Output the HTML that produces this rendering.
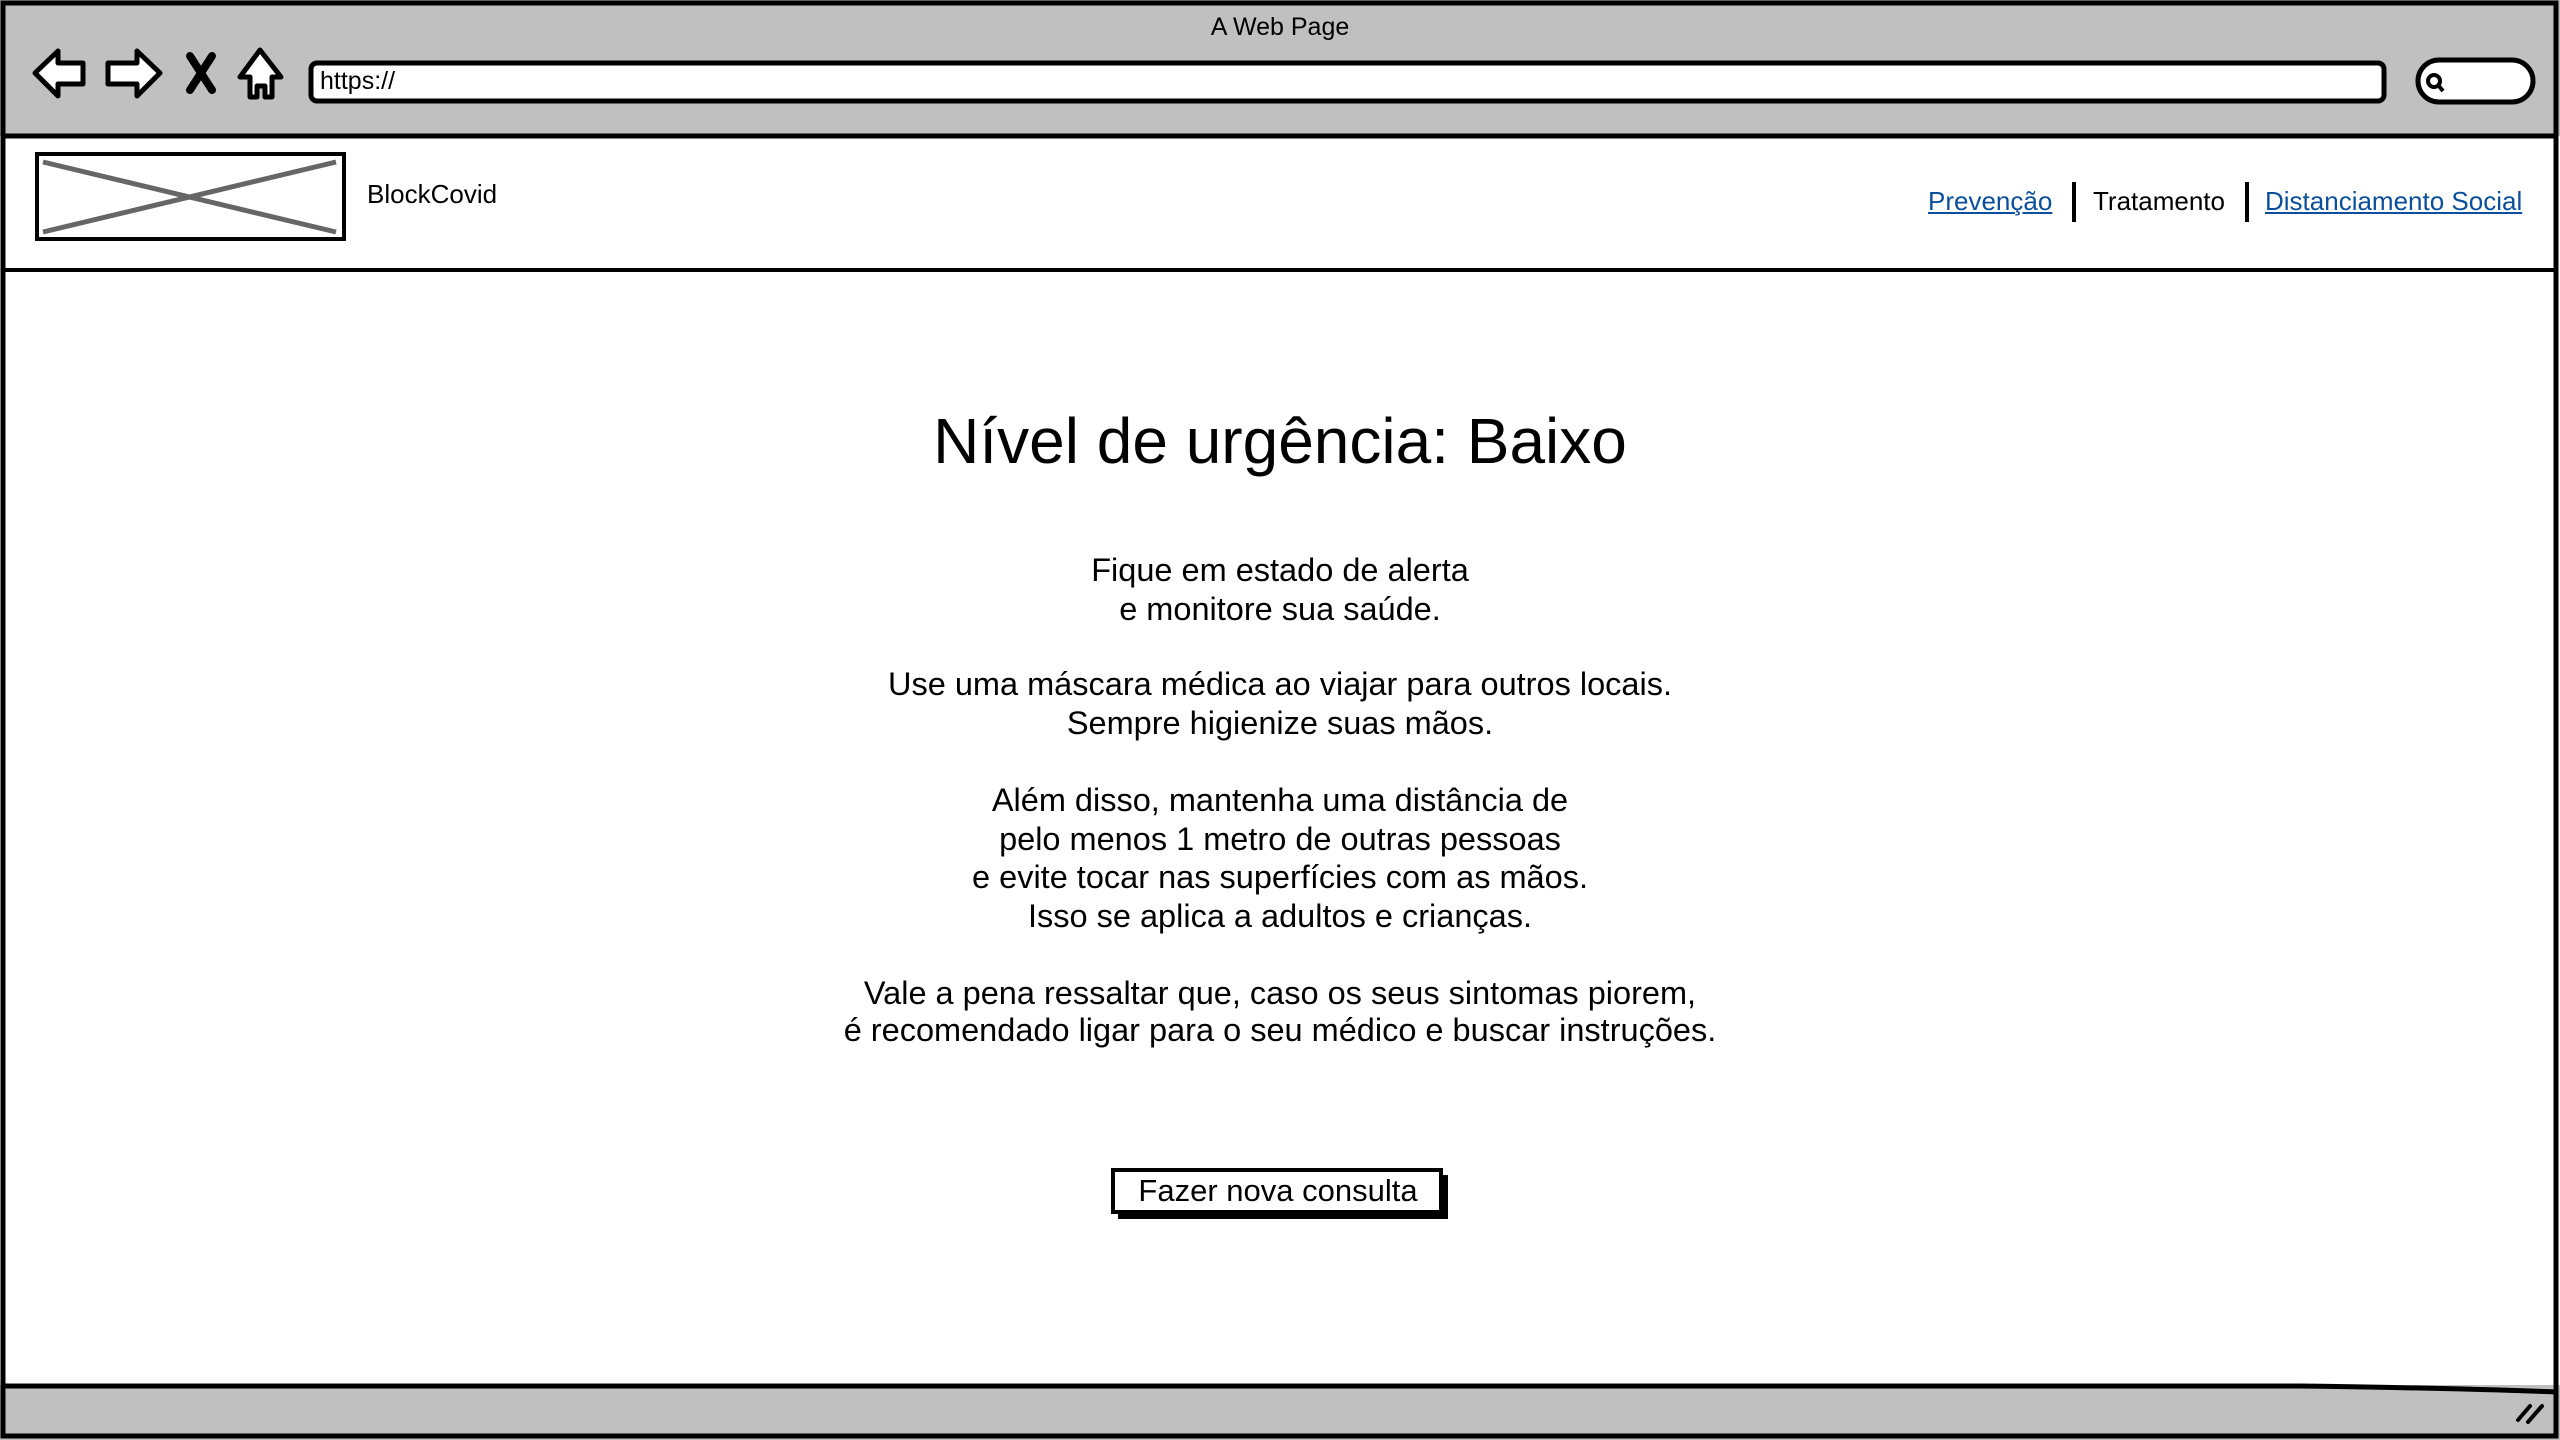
<!DOCTYPE html>
<html><head><meta charset="utf-8"><style>
html,body{margin:0;padding:0;width:2560px;height:1440px;overflow:hidden;background:#fff;font-family:"Liberation Sans",sans-serif;color:#000}
.abs{position:absolute}
.c{position:absolute;left:0;width:2560px;text-align:center;white-space:nowrap}
.p{font-size:32.5px;line-height:38px}
a{color:#0a4f9b;text-decoration:underline}
</style></head><body>
<div class="abs" style="left:0;top:0;width:2560px;height:136px;background:#c0c0c0"></div>
<div class="abs" style="left:0;top:1385px;width:2560px;height:55px;background:#c0c0c0"></div>
<svg class="abs" style="left:0;top:0" width="2560" height="1440">
<rect x="3" y="3" width="2553" height="1433" fill="none" stroke="#000" stroke-width="5"/>
<line x1="3" y1="136" x2="2557" y2="136" stroke="#000" stroke-width="5"/>
<line x1="3" y1="270" x2="2557" y2="270" stroke="#000" stroke-width="4"/>
<path d="M3 1386 L2300 1386 Q2450 1388 2557 1392" fill="none" stroke="#000" stroke-width="5"/>
<path d="M35 73 L58 51 L58 63 L83 63 L83 84 L58 84 L58 96 Z" fill="#fff" stroke="#000" stroke-width="5" stroke-linejoin="round"/>
<path d="M160 73 L137 51 L137 63 L108 63 L108 84 L137 84 L137 96 Z" fill="#fff" stroke="#000" stroke-width="5" stroke-linejoin="round"/>
<path d="M190 56 L212 90 M212 56 L190 90" stroke="#000" stroke-width="8" stroke-linecap="round"/>
<path d="M260 50 L281 77 L272 77 L272 97 L265 97 L265 86 L257 86 L257 97 L250 97 L250 77 L240 77 Z" fill="#fff" stroke="#000" stroke-width="5" stroke-linejoin="round"/>
<rect x="311" y="63" width="2073" height="38" rx="6" fill="#fff" stroke="#000" stroke-width="5"/>
<rect x="2418" y="60" width="115" height="42" rx="21" fill="#fff" stroke="#000" stroke-width="5"/>
<circle cx="2434" cy="81" r="6" fill="none" stroke="#000" stroke-width="4"/>
<line x1="2438" y1="85" x2="2443" y2="91" stroke="#000" stroke-width="4"/>
<rect x="37" y="154" width="307" height="85" fill="#fff" stroke="#000" stroke-width="4"/>
<path d="M43 162 L336 232 M43 232 L336 162" stroke="#666" stroke-width="5"/>
<line x1="2074" y1="182" x2="2074" y2="222" stroke="#000" stroke-width="4"/>
<line x1="2247" y1="182" x2="2247" y2="222" stroke="#000" stroke-width="4"/>
<rect x="1118" y="1175" width="330" height="44" fill="#000"/>
<rect x="1113" y="1170" width="328" height="42" fill="#fff" stroke="#000" stroke-width="4"/>
<path d="M2518 1420 L2530 1406 M2528 1422 L2542 1406" stroke="#000" stroke-width="4" stroke-linecap="round"/>
</svg>
<div class="c" style="top:12px;font-size:25px;line-height:30px">A Web Page</div>
<div class="abs" style="left:320px;top:66px;font-size:25px;line-height:30px">https://</div>
<div class="abs" style="left:367px;top:179px;font-size:26px;line-height:30px">BlockCovid</div>
<div class="abs" style="left:1928px;top:186px;font-size:26px;line-height:30px;white-space:nowrap"><a>Prevenção</a></div>
<div class="abs" style="left:2093px;top:186px;font-size:26px;line-height:30px;white-space:nowrap">Tratamento</div>
<div class="abs" style="left:2265px;top:186px;font-size:26px;line-height:30px;white-space:nowrap"><a>Distanciamento Social</a></div>
<div class="c" style="top:404px;font-size:64px;line-height:74px">Nível de urgência: Baixo</div>
<div class="c p" style="top:551px">Fique em estado de alerta</div>
<div class="c p" style="top:590px">e monitore sua saúde.</div>
<div class="c p" style="top:665px">Use uma máscara médica ao viajar para outros locais.</div>
<div class="c p" style="top:704px">Sempre higienize suas mãos.</div>
<div class="c p" style="top:781px">Além disso, mantenha uma distância de</div>
<div class="c p" style="top:820px">pelo menos 1 metro de outras pessoas</div>
<div class="c p" style="top:858px">e evite tocar nas superfícies com as mãos.</div>
<div class="c p" style="top:897px">Isso se aplica a adultos e crianças.</div>
<div class="c p" style="top:974px">Vale a pena ressaltar que, caso os seus sintomas piorem,</div>
<div class="c p" style="top:1011px">é recomendado ligar para o seu médico e buscar instruções.</div>
<div class="abs" style="left:1113px;top:1172px;width:330px;text-align:center;font-size:31px;line-height:38px;white-space:nowrap">Fazer nova consulta</div>
</body></html>
